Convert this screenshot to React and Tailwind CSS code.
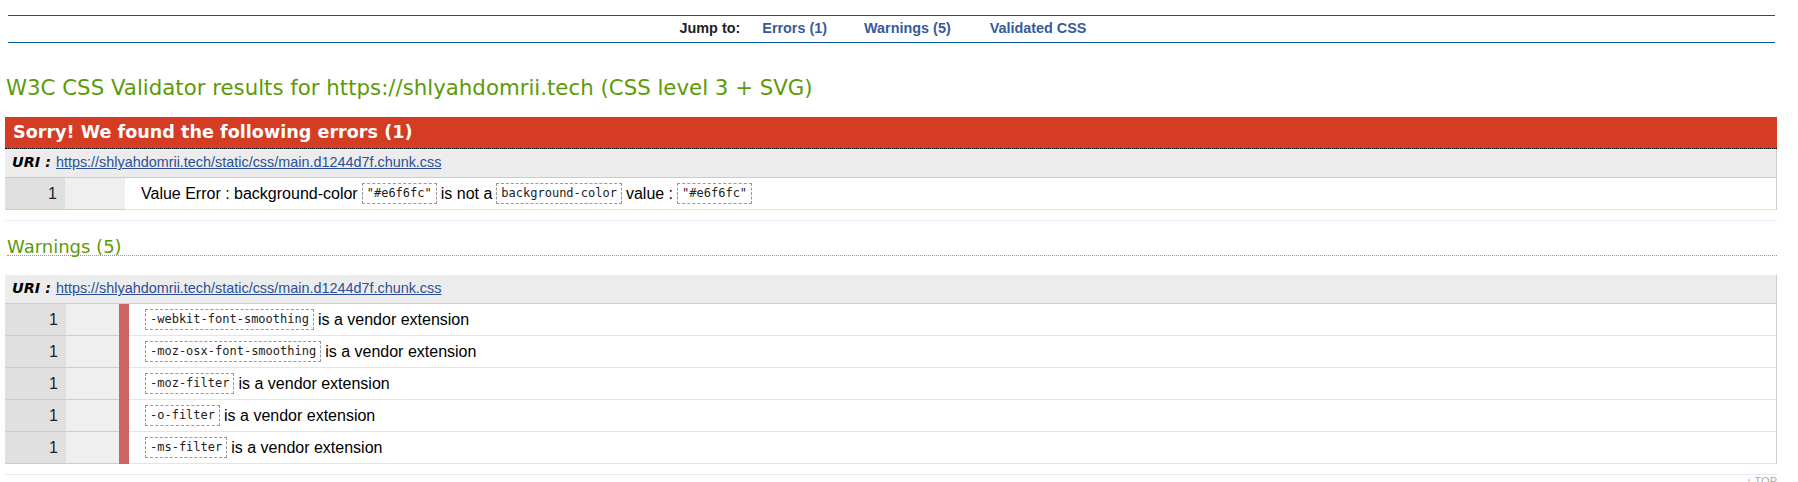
import React from 'react';

const URL = 'https://shlyahdomrii.tech/static/css/main.d1244d7f.chunk.css';

function Code({ children }) {
  return (
    <code className="font-['DejaVu_Sans_Mono',monospace] text-[12px] leading-[15px] border border-dashed border-[#999] px-[4px] py-[2px] text-[#222]">
      {children}
    </code>
  );
}

function UriRow() {
  return (
    <div className="h-[29px] bg-[#ececec] border-b border-[#cccccc] flex items-center pl-[7px] border-r border-r-[#cccccc]">
      <span className="font-['DejaVu_Sans',sans-serif] font-bold italic text-[14.4px] mr-[5px]">URI :</span>
      <a href="#" className="text-[14.4px] text-[#2c4f97] underline">{URL}</a>
    </div>
  );
}

function Row({ stripe, children }) {
  return (
    <div className="flex h-[32px]">
      <div className={`${stripe ? 'w-[61px]' : 'w-[60px]'} bg-[#e0e0e0] border-b border-[#cccccc] flex items-center justify-end pr-[8px] text-[16px] text-[#222]`}>
        1
      </div>
      <div className={`${stripe ? 'w-[53px]' : 'w-[60px]'} bg-[#efefef] border-b border-[#cccccc]`} />
      {stripe && <div className="w-[10px] bg-[#cd6464]" />}
      <div className="flex-1 border-b border-[#f9dddd] border-r border-r-[#cccccc] flex items-center pl-[16px] text-[16px] gap-[4px] whitespace-pre">
        {children}
      </div>
    </div>
  );
}

const warnings = [
  '-webkit-font-smoothing',
  '-moz-osx-font-smoothing',
  '-moz-filter',
  '-o-filter',
  '-ms-filter',
];

export default function App() {
  return (
    <div className="min-h-screen bg-white font-['Liberation_Sans',Arial,sans-serif] text-black overflow-hidden">
      <nav className="ml-[8px] w-[1767px] mt-[15px] h-[28px] border-y border-[#005a9c] flex items-center justify-center pr-[17px] text-[14.4px] font-bold">
        <span className="text-[#222]">Jump to:</span>
        <a href="#" className="ml-[22px] text-[#365b9c]">Errors (1)</a>
        <a href="#" className="ml-[37px] text-[#365b9c]">Warnings (5)</a>
        <a href="#" className="ml-[39px] text-[#365b9c]">Validated CSS</a>
      </nav>

      <div className="ml-[5px] w-[1772px]">
        <h2 className="mt-[32px] ml-[1px] font-['DejaVu_Sans',sans-serif] text-[21.3px] leading-[25px] text-[#5c9a08]">
          W3C CSS Validator results for https://shlyahdomrii.tech (CSS level 3 + SVG)
        </h2>

        <div className="mt-[17px] pb-[10px] border-b border-[#e8e8f6]">
          <div className="h-[32px] bg-[#d43c23] border-b border-dotted border-black flex items-center px-[8px] font-['DejaVu_Sans',sans-serif] font-bold text-[17.6px] text-white">
            Sorry! We found the following errors (1)
          </div>
          <UriRow />
          <Row>
            <span>Value Error : background-color</span>
            <Code>"#e6f6fc"</Code>
            <span>is not a</span>
            <Code>background-color</Code>
            <span>value :</span>
            <Code>"#e6f6fc"</Code>
          </Row>
        </div>

        <div className="pb-[10px] border-b border-[#e8e8f6]">
          <h3 className="mt-[14px] ml-[2px] h-[21px] leading-[24px] border-b border-dotted border-[#999966] font-['DejaVu_Sans',sans-serif] text-[18px] text-[#5c9a08]">
            Warnings (5)
          </h3>
          <div className="mt-[19px]">
            <UriRow />
            {warnings.map((w) => (
              <Row key={w} stripe>
                <Code>{w}</Code>
                <span>is a vendor extension</span>
              </Row>
            ))}
          </div>
        </div>
        <div className="text-right text-[11px] leading-[12px] text-[#aaaaaa]">↑ TOP</div>
      </div>
    </div>
  );
}
